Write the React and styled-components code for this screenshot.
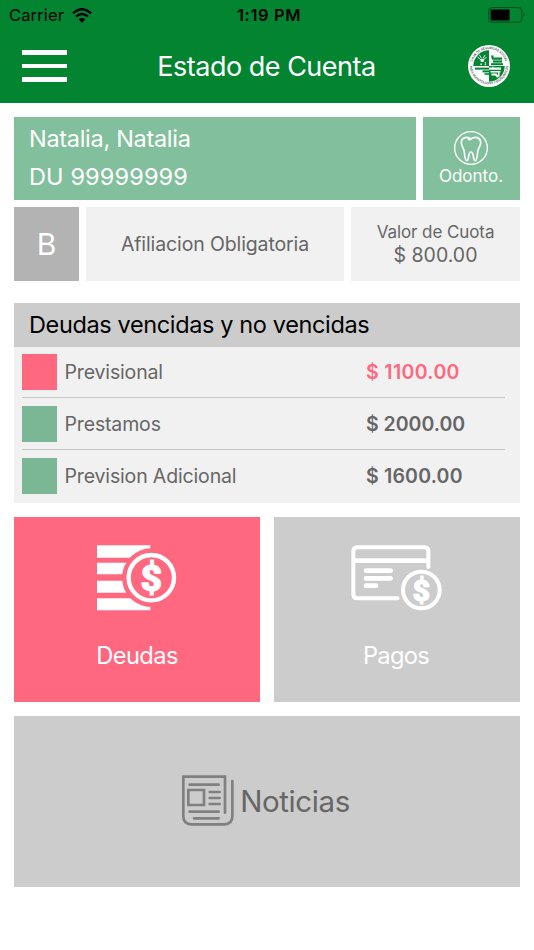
import React from 'react'
import styled, { createGlobalStyle } from 'styled-components'

//css
const GlobalStyle = createGlobalStyle`
  * {
    box-sizing: border-box;
  }
  body {
    margin: 0;
    background: #fff;
    font-family: Inter, "Liberation Sans", sans-serif;
  }
  svg {
    display: block;
    flex: none;
  }
`

const Screen = styled.div`
  width: 534px;
  height: 950px;
  background: #fff;
  overflow: hidden;
`

const Header = styled.header`
  height: 103px;
  background: #028431;
`

const StatusBar = styled.div`
  display: grid;
  grid-template-columns: 1fr auto 1fr;
  align-items: center;
  height: 30px;
  padding: 0 8px 0 9px;
  font-size: 16.5px;
  color: #000;
`

const Carrier = styled.div`
  display: flex;
  align-items: center;
  gap: 8px;
  letter-spacing: 0.15px;
`

const Time = styled.span`
  padding-left: 3px;
  font-weight: 600;
  letter-spacing: 0.6px;
`

const Battery = styled.div`
  display: flex;
  justify-content: flex-end;
`

const NavBar = styled.div`
  display: grid;
  grid-template-columns: 60px 1fr 60px;
  align-items: center;
  height: 72px;
  padding: 0 23px 0 22px;
`

const MenuButton = styled.button`
  display: flex;
  flex-direction: column;
  gap: 9px;
  width: 45px;
  padding: 0;
  border: 0;
  background: none;
`

const MenuLine = styled.span`
  height: 4.7px;
  background: #fff;
`

const Title = styled.h1`
  margin: 0;
  font-size: 27px;
  font-weight: 400;
  letter-spacing: -0.5px;
  text-align: center;
  white-space: nowrap;
  color: #fff;
`

const LogoWrap = styled.div`
  justify-self: end;
`

const Content = styled.main`
  display: flex;
  flex-direction: column;
  padding: 14px 14px 0;
`

const Row = styled.div`
  display: flex;
  gap: ${props => props.$gap || 7}px;
  height: ${props => props.$height}px;
  margin-bottom: ${props => props.$after}px;
`

const Person = styled.div`
  flex: 1;
  padding: 3px 15px;
  background: #82bf9c;
  color: #fff;
  font-size: 23.5px;
  line-height: 37.5px;
`

const Line = styled.div`
  letter-spacing: ${props => props.$spacing || 0}px;
  white-space: nowrap;
`

const Plan = styled.div`
  display: flex;
  flex-direction: column;
  align-items: center;
  gap: 1px;
  width: 97px;
  padding: 14px 1px 0 0;
  background: #82bf9c;
  color: #fff;
  font-size: 17px;
  line-height: 20px;
`

const Category = styled.div`
  display: flex;
  align-items: center;
  justify-content: center;
  width: 65px;
  background: #b3b3b3;
  color: #fff;
  font-size: 30px;
`

const Info = styled.div`
  display: flex;
  flex-direction: column;
  align-items: center;
  justify-content: center;
  width: ${props => props.$width}px;
  background: #f1f1f1;
  color: #666;
  font-size: 19.5px;
  line-height: 23px;
`

const Small = styled(Line)`
  font-size: 17px;
`

const Debts = styled.section`
  height: 200px;
  margin-bottom: 14px;
  background: #f1f1f1;
`

const DebtsTitle = styled.h2`
  height: 44px;
  margin: 0 0 -1px;
  padding-left: 15px;
  background: #ccc;
  color: #000;
  font-size: 23.5px;
  font-weight: 400;
  line-height: 44px;
  letter-spacing: -0.37px;
`

const DebtRow = styled.div`
  display: flex;
  align-items: center;
  height: 52px;
  margin: 0 15px 0 8px;
  padding-top: 1px;
  border-bottom: 1px solid ${props => (props.$last ? 'transparent' : '#c6c6c6')};
  color: #666;
  font-size: 19.5px;
`

const Swatch = styled.span`
  width: 35px;
  height: 36px;
  margin-right: 7.5px;
  background: ${props => (props.$due ? '#ff687e' : '#7bb795')};
`

const Concept = styled.span`
  flex: 1;
  letter-spacing: -0.15px;
`

const Amount = styled.span`
  width: 139px;
  font-weight: 600;
  letter-spacing: ${props => props.$spacing}px;
  color: ${props => (props.$due ? '#ff687e' : '#666')};
`

const Card = styled.a`
  display: flex;
  flex-direction: column;
  align-items: center;
  justify-content: space-between;
  width: 246px;
  padding: 28px ${props => (props.$active ? 0 : 2)}px 32px 0;
  background: ${props => (props.$active ? '#ff687e' : '#ccc')};
  color: #fff;
  font-size: 23.7px;
  line-height: 29px;
`

const News = styled.a`
  display: flex;
  align-items: center;
  justify-content: center;
  gap: 6px;
  height: 171px;
  padding: 0 2px 2px 0;
  background: #ccc;
  color: #666;
  font-size: 29.5px;
`

const WifiIcon = () => (
  <svg width="20" height="15" viewBox="0 0 60 45">
    <g fill="none" stroke="#000" strokeWidth="7">
      <path d="M3 16 Q30 -9 57 16" />
      <path d="M12 26 Q30 10 48 26" />
    </g>
    <path d="M20 34 Q30 25 40 34 L30 45 Z" />
  </svg>
)

const BatteryIcon = () => (
  <svg width="38" height="16" viewBox="0 0 38 16">
    <rect x="0.7" y="0.6" width="33" height="14.6" rx="2.8" fill="none" stroke="#00491a" strokeWidth="1" />
    <rect x="2.6" y="2.4" width="19" height="11" rx="0.8" />
    <path d="M35.5 5.2 Q37.4 7.8 35.5 10.4 Z" fill="#00491a" />
  </svg>
)

const LogoIcon = () => (
  <svg width="44" height="44" viewBox="-22 -22 44 44">
    <defs>
      <path id="arcTop" d="M-17 0 A17 17 0 0 1 17 0" />
      <path id="arcBottom" d="M-19.3 -1 A19.3 19.3 0 0 0 19.3 -1" />
    </defs>
    <circle r="21" fill="#fff" />
    <path d="M0 0 H-15.7 A15.7 15.7 0 0 1 0 -15.7 Z" fill="#028431" />
    <path d="M0 0 H15.7 A15.7 15.7 0 0 1 0 15.7 Z" fill="#028431" />
    <g fill="#333" fontSize="3.1" fontWeight="500" textAnchor="middle">
      <text><textPath href="#arcTop" startOffset="50%">CAJA DE SEGURIDAD SOCIAL</textPath></text>
      <text><textPath href="#arcBottom" startOffset="50%">PARA ODONTOLOGOS Y BIOQUIMICOS</textPath></text>
    </g>
    <path
      d="M-11.5 -9 L-8.5 -6.5 L-7.5 -4 M-2.5 -9 L-5 -6.5 L-6 -4 M-9.5 -11 L-7.5 -7.5 M-4 -11 L-6 -7.5"
      fill="none"
      stroke="#fff"
      strokeWidth="0.9"
    />
    <path d="M-8.2 -7 h3 l-0.7 3 h-1.6 Z M-8.6 -2.6 h1.4 v1.5 h-1.4 Z M-4.2 -4 h1.3 v1.4 h-1.3 Z M-4.2 -2 h1.3 v1.2 h-1.3 Z" fill="#fff" />
    <g fill="#028431">
      <path d="M2 -10.5 h2.5 v2 h8.5 v2.2 h-10 Z" />
      <path d="M4 -5.6 h9 v2.2 h-9 Z" />
      <path d="M2 -2.8 h12 v2 h-12 Z" />
      <path d="M-14 1.6 h14 v2 h-14 Z" />
      <path d="M-6.5 4.4 h6.5 v2 h-6.5 Z" />
      <path d="M-4.5 7.2 h4.5 v1.6 h-4.5 Z" />
    </g>
    <g fill="#fff">
      <path d="M0 1.6 h3 v-0.8 h1.5 v0.8 h7.5 v2.2 h-12 Z" />
      <path d="M1.5 5 h10 v1.4 h-10 Z M2.5 7.6 h5 l2 2.4 v1.6 h-1.6 l-1.6 -2 h-3.8 Z M9 6 h1.5 v4.5 h-1.5 Z" />
    </g>
  </svg>
)

const ToothIcon = () => (
  <svg width="34" height="34" viewBox="561 78 102 102">
    <g fill="none" stroke="#fff" strokeLinejoin="round">
      <circle cx="612" cy="129" r="49" strokeWidth="4" />
      <path
        d="M612 102 C603 94 583 95 583 113 C583 124 591 129 592 141 C593 153 594 166 599 167 C607 168 602 141 612 141 C622 141 617 168 625 167 C630 166 631 153 632 141 C633 129 641 124 641 113 C641 95 621 94 612 102 C609 105 605 104 602 102"
        strokeWidth="5"
      />
    </g>
  </svg>
)

const DebtIcon = () => (
  <svg width="80" height="66" viewBox="50 44 240 198">
    <g fill="#fff">
      <path d="M50 45 H210 V82 H50 Z" />
      <path d="M50 97 H180 V132 H50 Z" />
      <path d="M50 151 H180 V187 H50 Z" />
      <path d="M50 204 H210 V240 H50 Z" />
    </g>
    <circle cx="213" cy="142" r="88" fill="#ff687e" />
    <circle cx="213" cy="142" r="68" fill="none" stroke="#fff" strokeWidth="13" />
    <text x="213" y="182" textAnchor="middle" fontFamily="Roboto" fontWeight="900" fontSize="112" fill="#fff" stroke="#fff" strokeWidth="3">$</text>
  </svg>
)

const PaymentIcon = () => (
  <svg width="91" height="66" viewBox="47 44 273 198">
    <g fill="none" stroke="#fff" strokeWidth="12" strokeLinecap="round">
      <path d="M279 110 V63 Q279 51 267 51 H66 Q54 51 54 63 V192 Q54 204 66 204 H187" />
      <path d="M54 91 H279" strokeWidth="14" strokeLinecap="butt" />
      <path d="M92 121 H166 M92 144 H166 M92 166 H122" strokeWidth="14" />
      <circle cx="258" cy="179" r="55" strokeWidth="12" />
    </g>
    <text x="258" y="211" textAnchor="middle" fontFamily="Roboto" fontWeight="900" fontSize="91" fill="#fff" stroke="#fff" strokeWidth="3">$</text>
  </svg>
)

const NewsIcon = () => (
  <svg width="52" height="51" viewBox="37 46 156 153">
    <g fill="none" stroke="#808080" strokeWidth="8" strokeLinecap="round">
      <path d="M166 159 V51 H41 V170 Q41 194 65 194 H164 Q188 194 188 170 V64" />
      <path d="M56 91 H103 V136 H56 Z" />
      <path d="M60 75 H147 M120 97 H150 M120 115 H150 M120 133 H150 M60 156 H147 M73 176 H147" />
    </g>
  </svg>
)

const debts = [
  { name: 'Previsional', amount: '$ 1100.00', due: true, spacing: 0.35 },
  { name: 'Prestamos', amount: '$ 2000.00', spacing: 0 },
  { name: 'Prevision Adicional', amount: '$ 1600.00', spacing: 0.2 },
]

const App = () => {
  return (
    <Screen>
      <GlobalStyle />
      <Header>
        <StatusBar>
          <Carrier>
            Carrier
            <WifiIcon />
          </Carrier>
          <Time>1:19 PM</Time>
          <Battery>
            <BatteryIcon />
          </Battery>
        </StatusBar>
        <NavBar>
          <MenuButton aria-label="Menu">
            <MenuLine />
            <MenuLine />
            <MenuLine />
          </MenuButton>
          <Title>Estado de Cuenta</Title>
          <LogoWrap>
            <LogoIcon />
          </LogoWrap>
        </NavBar>
      </Header>

      <Content>
        <Row $height={83} $after={7}>
          <Person>
            <Line $spacing={-0.3}>Natalia, Natalia</Line>
            <Line $spacing={0.12}>DU 99999999</Line>
          </Person>
          <Plan>
            <ToothIcon />
            <Line>Odonto.</Line>
          </Plan>
        </Row>
        <Row $height={74} $after={22}>
          <Category>B</Category>
          <Info $width={258}>
            <Line $spacing={-0.12}>Afiliacion Obligatoria</Line>
          </Info>
          <Info $width={169}>
            <Small $spacing={-0.08}>Valor de Cuota</Small>
            <Line>$ 800.00</Line>
          </Info>
        </Row>

        <Debts>
          <DebtsTitle>Deudas vencidas y no vencidas</DebtsTitle>
          {debts.map((debt, i) => (
            <DebtRow key={debt.name} $last={i === debts.length - 1}>
              <Swatch $due={debt.due} />
              <Concept>{debt.name}</Concept>
              <Amount $due={debt.due} $spacing={debt.spacing}>{debt.amount}</Amount>
            </DebtRow>
          ))}
        </Debts>

        <Row $height={185} $gap={14} $after={14}>
          <Card $active>
            <DebtIcon />
            <Line $spacing={-0.6}>Deudas</Line>
          </Card>
          <Card>
            <PaymentIcon />
            <Line $spacing={-0.7}>Pagos</Line>
          </Card>
        </Row>
        <News>
          <NewsIcon />
          <Line $spacing={-0.4}>Noticias</Line>
        </News>
      </Content>
    </Screen>
  )
}

export default App
